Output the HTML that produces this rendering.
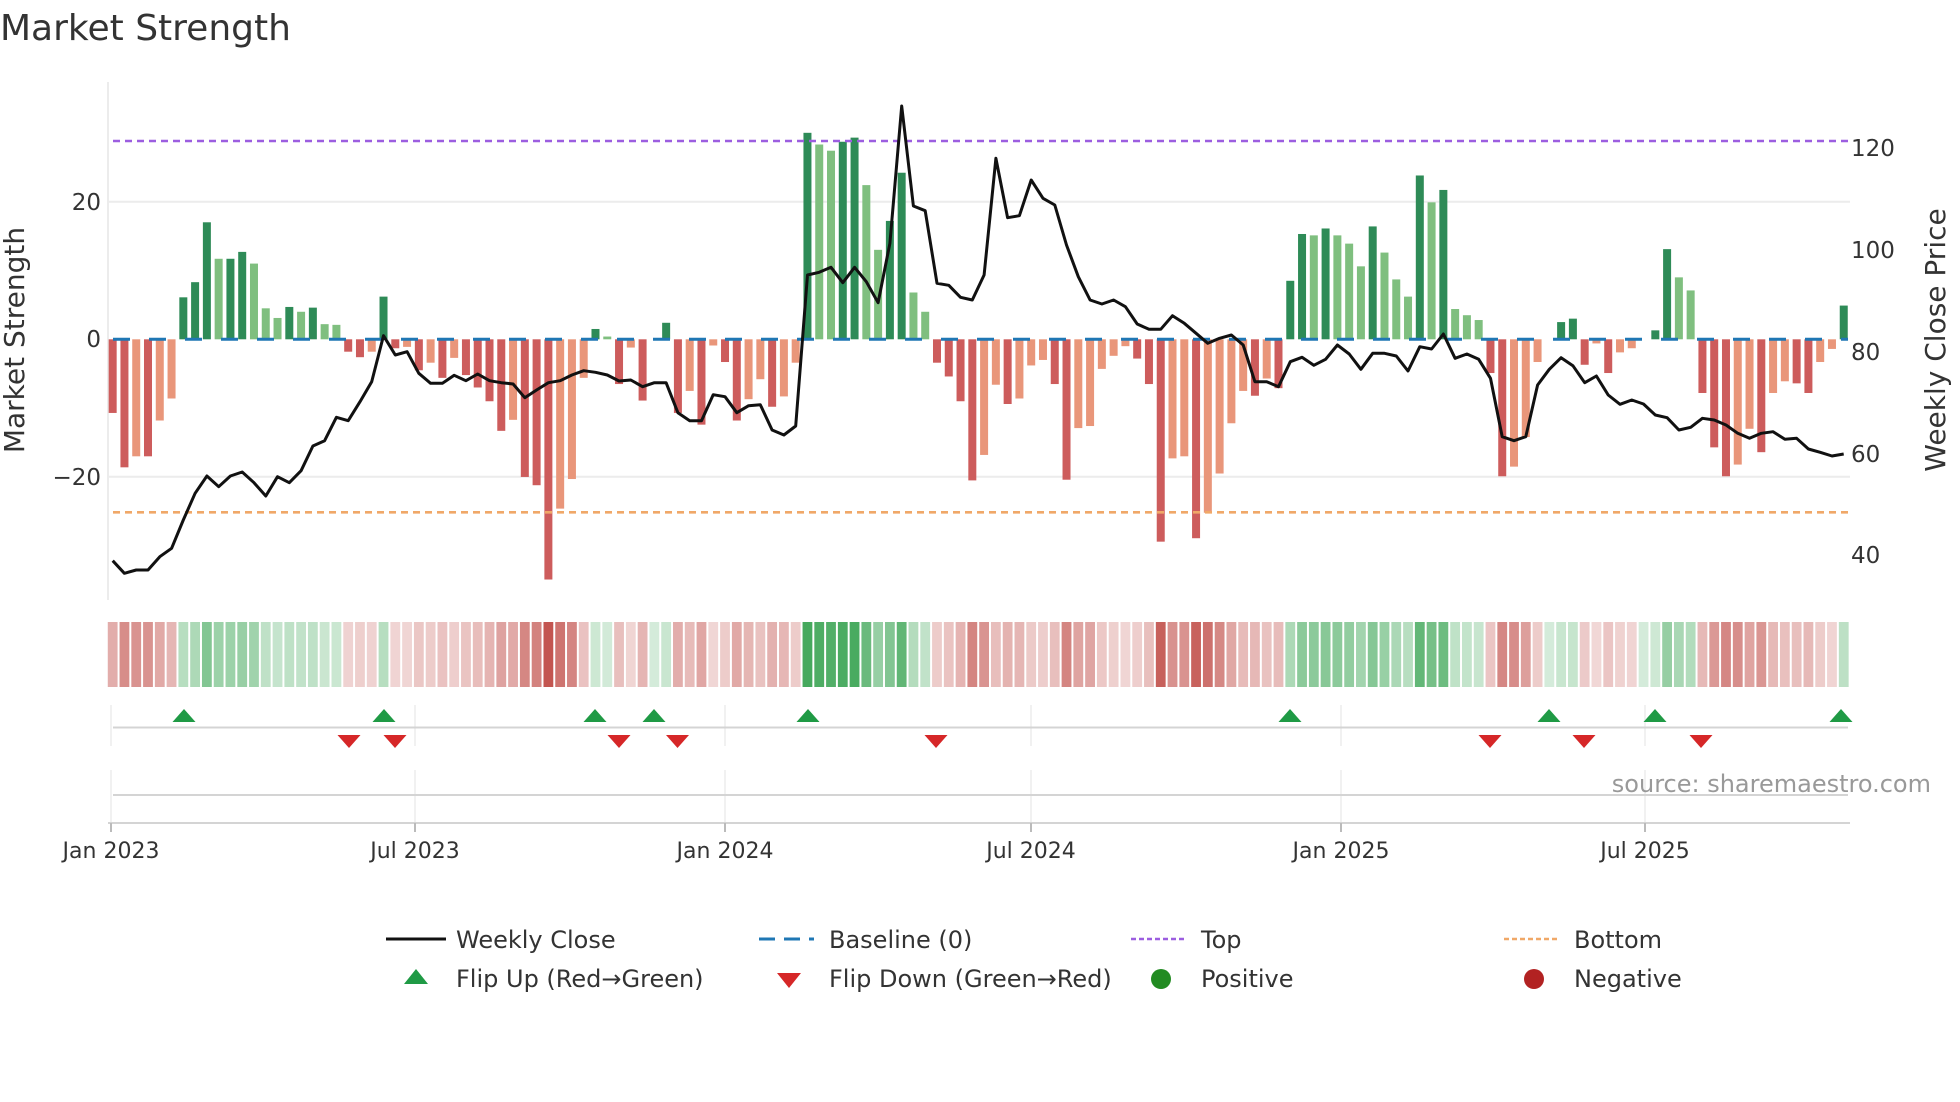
<!DOCTYPE html>
<html><head><meta charset="utf-8">
<style>
html,body{margin:0;padding:0;background:#fff;width:1960px;height:1102px;overflow:hidden}
svg{display:block}
text{font-family:"DejaVu Sans","Liberation Sans",sans-serif;fill:#333}
</style></head>
<body>
<svg id="s" width="1960" height="1102" viewBox="0 0 1960 1102" xmlns="http://www.w3.org/2000/svg">
<text x="0" y="40" font-size="36">Market Strength</text>
<line x1="108" y1="82" x2="108" y2="600" stroke="#e6e6e6" stroke-width="1.5"/>
<line x1="108" y1="201.7" x2="1850" y2="201.7" stroke="#ececec" stroke-width="2"/>
<line x1="108" y1="476.7" x2="1850" y2="476.7" stroke="#ececec" stroke-width="2"/>
<g id="bars"></g>
<line x1="113" y1="339.3" x2="1848" y2="339.3" stroke="#1f77b4" stroke-width="3" stroke-dasharray="17 19"/>
<line x1="113" y1="141" x2="1848" y2="141" stroke="#9c5ee0" stroke-width="2.6" stroke-dasharray="7 5"/>
<line x1="113" y1="512.3" x2="1848" y2="512.3" stroke="#f0a868" stroke-width="2.6" stroke-dasharray="7 5"/>
<polyline id="price" fill="none" stroke="#111" stroke-width="3" stroke-linejoin="round"/>
<g font-size="23" text-anchor="end">
<text x="101" y="210">20</text>
<text x="101" y="347">0</text>
<text x="101" y="485">−20</text>
</g>
<text transform="translate(24,340) rotate(-90)" font-size="28" text-anchor="middle">Market Strength</text>
<g font-size="23">
<text x="1851" y="156">120</text>
<text x="1851" y="258">100</text>
<text x="1851" y="360">80</text>
<text x="1851" y="462">60</text>
<text x="1851" y="563">40</text>
</g>
<text transform="translate(1945,340) rotate(-90)" font-size="28" text-anchor="middle">Weekly Close Price</text>
<g id="heat"></g>
<g stroke="#ececec" stroke-width="1.5">
<line x1="111" y1="705" x2="111" y2="746"/><line x1="415" y1="705" x2="415" y2="746"/><line x1="725" y1="705" x2="725" y2="746"/><line x1="1031" y1="705" x2="1031" y2="746"/><line x1="1341" y1="705" x2="1341" y2="746"/><line x1="1645" y1="705" x2="1645" y2="746"/>
<line x1="111" y1="770" x2="111" y2="822"/><line x1="415" y1="770" x2="415" y2="822"/><line x1="725" y1="770" x2="725" y2="822"/><line x1="1031" y1="770" x2="1031" y2="822"/><line x1="1341" y1="770" x2="1341" y2="822"/><line x1="1645" y1="770" x2="1645" y2="822"/>
</g>
<line x1="113" y1="727.5" x2="1848" y2="727.5" stroke="#d4d4d4" stroke-width="2"/>
<line x1="113" y1="795" x2="1848" y2="795" stroke="#d4d4d4" stroke-width="2"/>
<line x1="108" y1="823" x2="1850" y2="823" stroke="#d4d4d4" stroke-width="2"/>
<g id="mk"></g>
<g stroke="#bbb" stroke-width="2">
<line x1="111" y1="823" x2="111" y2="832"/><line x1="415" y1="823" x2="415" y2="832"/><line x1="725" y1="823" x2="725" y2="832"/><line x1="1031" y1="823" x2="1031" y2="832"/><line x1="1341" y1="823" x2="1341" y2="832"/><line x1="1645" y1="823" x2="1645" y2="832"/>
</g>
<g font-size="22" text-anchor="middle">
<text x="111" y="858">Jan 2023</text>
<text x="415" y="858">Jul 2023</text>
<text x="725" y="858">Jan 2024</text>
<text x="1031" y="858">Jul 2024</text>
<text x="1341" y="858">Jan 2025</text>
<text x="1645" y="858">Jul 2025</text>
</g>
<text x="1931" y="792" font-size="24" style="fill:#999" text-anchor="end">source: sharemaestro.com</text>
<g font-size="24">
<line x1="386" y1="939" x2="446" y2="939" stroke="#111" stroke-width="3"/>
<text x="456" y="948">Weekly Close</text>
<line x1="759" y1="939" x2="814" y2="939" stroke="#1f77b4" stroke-width="3" stroke-dasharray="16 9"/>
<text x="829" y="948">Baseline (0)</text>
<line x1="1131" y1="939" x2="1186" y2="939" stroke="#9c5ee0" stroke-width="2.6" stroke-dasharray="5 3"/>
<text x="1201" y="948">Top</text>
<line x1="1504" y1="939" x2="1559" y2="939" stroke="#f0a868" stroke-width="2.6" stroke-dasharray="5 3"/>
<text x="1574" y="948">Bottom</text>
<polygon points="416,969 428,984 404,984" fill="#1f9a45"/>
<text x="456" y="987">Flip Up (Red→Green)</text>
<polygon points="777,973 801,973 789,988" fill="#d62728"/>
<text x="829" y="987">Flip Down (Green→Red)</text>
<circle cx="1161" cy="979" r="10" fill="#228b22"/>
<text x="1201" y="987">Positive</text>
<circle cx="1534" cy="979" r="10" fill="#b22222"/>
<text x="1574" y="987">Negative</text>
</g>
</svg>
<script>
var V=[-10.7,-18.6,-17,-17,-11.8,-8.6,6.1,8.3,17,11.7,11.7,12.7,11,4.5,3.1,4.7,4,4.6,2.2,2.1,-1.8,-2.6,-1.8,6.2,-1.3,-1.1,-4.5,-3.4,-5.6,-2.7,-5.2,-7,-9,-13.3,-11.7,-20,-21.2,-34.9,-24.6,-20.3,
-5.6,1.5,0.4,-6.5,-1.2,-8.9,0,2.4,-10.7,-7.5,-12.4,-0.9,-3.3,-11.8,-8.7,-5.8,-9.8,-8.3,-3.4,30,28.3,27.4,28.7,29.3,22.4,13,17.2,24.2,6.8,4,-3.4,-5.4,-9,-20.5,-16.8,-6.6,-9.4,-8.6,-3.8,
-3,-6.5,-20.4,-12.9,-12.6,-4.3,-2.4,-1,-2.8,-6.5,-29.4,-17.3,-17,-28.9,-25.2,-19.5,-12.2,-7.5,-8.2,-5.7,-7.1,8.5,15.3,15.1,16.1,15.1,13.9,10.6,16.4,12.6,8.7,6.2,23.8,19.9,21.7,4.4,3.5,2.8,-4.9,-19.9,
-18.5,-14.2,-3.3,0,2.5,3,-3.7,-0.6,-4.9,-1.9,-1.3,0,1.3,13.1,9,7.1,-7.8,-15.7,-19.9,-18.2,-13,-16.4,-7.8,-6.1,-6.4,-7.8,-3.3,-1.4,4.9];
var P=[1382,1420,1410,1410,1370,1345,1260,1180,1128,1160,1128,1116,1148,1188,1130,1148,1112,1038,1022,952,962,905,845,707,765,755,820,850,850,826,842,822,842,848,852,893,870,848,842,825,
812,817,825,843,840,860,848,848,938,962,962,884,890,938,917,914,990,1005,978,525,517,502,548,502,545,608,430,18,318,332,550,556,592,600,525,175,353,347,240,
295,315,435,530,600,612,600,620,672,688,688,647,670,700,730,715,705,735,845,845,860,785,772,796,778,735,762,808,760,760,768,813,740,747,702,775,762,778,835,1010,
1022,1010,855,808,773,797,848,828,885,913,900,912,945,953,990,982,955,960,975,1000,1015,1000,995,1018,1015,1047,1057,1068,1062];
var ns="http://www.w3.org/2000/svg";
function el(t,a,p){var e=document.createElementNS(ns,t);for(var k in a)e.setAttribute(k,a[k]);p.appendChild(e);return e;}
var bars=document.getElementById('bars'),heat=document.getElementById('heat');
var z=339.3,u=6.883,pts=[];
for(var i=0;i<V.length;i++){
 var v=V[i],x=112.67+i*11.776;
 var prev=i>0?V[i-1]:0;
 var dark = Math.abs(v)>=Math.abs(prev) || (v*prev<=0);
 var c = v>=0 ? (dark?'#2e8b57':'#7fbf7f') : (dark?'#cd5c5c':'#e9967a');
 if(v!==0){var h=Math.abs(v)*u;el('rect',{x:x-4,y:v>0?z-h:z,width:8,height:h,fill:c},bars);}
 var t=0.22+0.78*Math.min(Math.abs(v),32)/32;
 var base=v>=0?[60,165,85]:[195,85,80];
 var col='rgb('+[0,1,2].map(function(k){return Math.round(255+(base[k]-255)*t)}).join(',')+')';
 el('rect',{x:x-4.9,y:622,width:9.8,height:65,fill:col},heat);
 pts.push(x.toFixed(1)+','+(100+P[i]/3).toFixed(1));
}
document.getElementById('price').setAttribute('points',pts.join(' '));
var mk=document.getElementById('mk');
[184,384,595,654,808,1290,1549,1655,1841].forEach(function(x){el('polygon',{points:(x)+',709 '+(x+11.5)+',722 '+(x-11.5)+',722',fill:'#1f9a45'},mk);});
[349,395,619,677.5,936,1490,1584,1701].forEach(function(x){el('polygon',{points:(x-11.5)+',735 '+(x+11.5)+',735 '+x+',748',fill:'#d62728'},mk);});
</script>
</body></html>
